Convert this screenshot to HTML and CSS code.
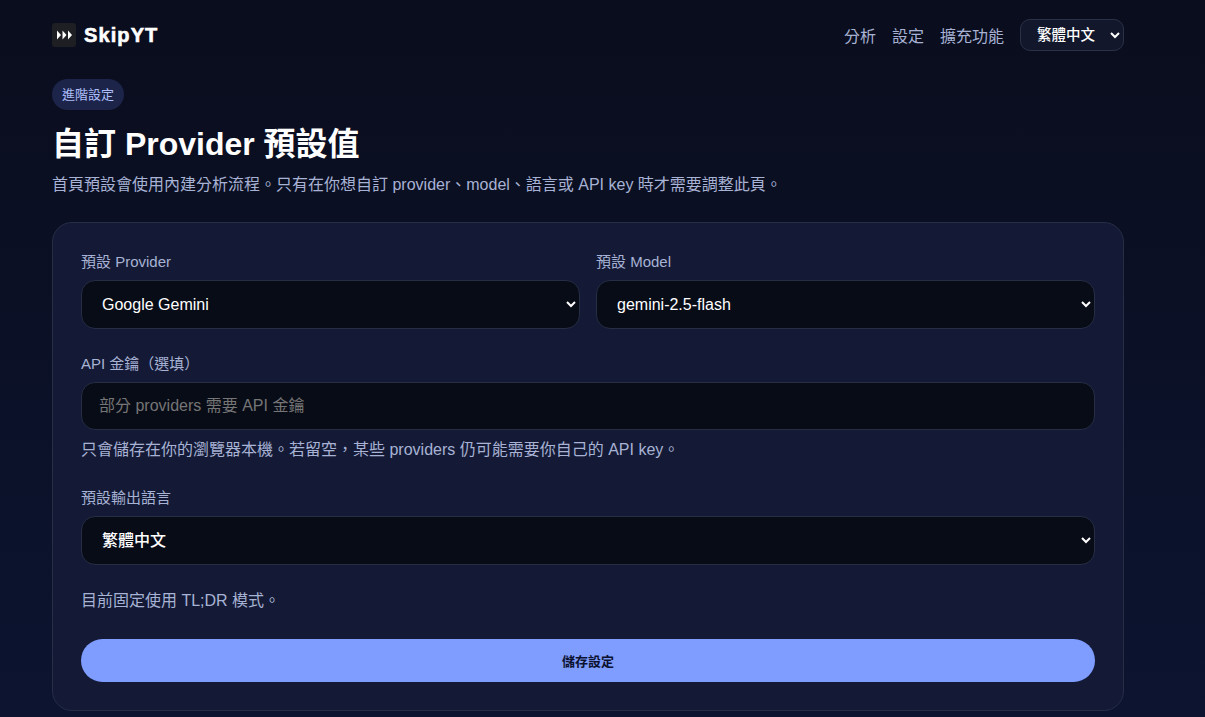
FILE: index.html
```html
<!DOCTYPE html>
<html lang="zh-Hant">
<head>
  <meta charset="utf-8">
  <title>SkipYT</title>
  <link rel="stylesheet" href="styles.css">
</head>
<body>
  <div class="container">
    <header class="topbar">
      <a class="brand" href="#">
        <span class="brand-icon">
          <svg width="16" height="10" viewBox="0 0 16 10" fill="#fff"><path d="M1 0.500 L5 5 L1 9.500Z"/><path d="M6.500 0.500 L10.500 5 L6.500 9.500Z"/><path d="M12 0.500 L16 5 L12 9.500Z"/></svg>
        </span>
        <span class="brand-name">SkipYT</span>
      </a>
      <nav class="nav">
        <a href="#">分析</a>
        <a href="#">設定</a>
        <a href="#">擴充功能</a>
        <select class="lang-select">
          <option>繁體中文</option>
          <option>English</option>
        </select>
      </nav>
    </header>

    <span class="badge">進階設定</span>
    <h1>自訂 Provider 預設值</h1>
    <p class="subtitle">首頁預設會使用內建分析流程。只有在你想自訂 provider、model、語言或 API key 時才需要調整此頁。</p>

    <form class="card">
      <div class="form-row">
        <div class="field">
          <label for="provider">預設 Provider</label>
          <select id="provider">
            <option>Google Gemini</option>
          </select>
        </div>
        <div class="field">
          <label for="model">預設 Model</label>
          <select id="model">
            <option>gemini-2.5-flash</option>
          </select>
        </div>
      </div>

      <div class="field field-key">
        <label for="apiKey">API 金鑰（選填）</label>
        <input type="text" id="apiKey" placeholder="部分 providers 需要 API 金鑰">
        <p class="hint">只會儲存在你的瀏覽器本機。若留空，某些 providers 仍可能需要你自己的 API key。</p>
      </div>

      <div class="field field-lang">
        <label for="language">預設輸出語言</label>
        <select id="language" class="select-bold">
          <option>繁體中文</option>
        </select>
      </div>

      <p class="mode-note">目前固定使用 TL;DR 模式。</p>

      <button type="button" class="save-btn">儲存設定</button>
    </form>
  </div>
</body>
</html>
```

FILE: styles.css
```css
* {
  box-sizing: border-box;
}
html {
  height: 100%;
}
body {
  margin: 0;
  height: 717px;
  overflow: hidden;
  font-family: "Liberation Sans", "Noto Sans CJK TC", sans-serif;
  background: linear-gradient(180deg, #0a0d1d 0%, #0c1430 100%);
  color: #fff;
}
.container {
  width: 1072px;
  margin-left: 52px;
}
.topbar {
  display: flex;
  justify-content: space-between;
  align-items: center;
  height: 70px;
}
.brand {
  display: flex;
  align-items: center;
  gap: 8px;
  color: #fff;
  text-decoration: none;
}
.brand-icon {
  display: flex;
  align-items: center;
  justify-content: center;
  width: 24px;
  height: 24px;
  border-radius: 3px;
  background-color: #1e1f23;
}
.brand-name {
  font-size: 20px;
  font-weight: 700;
  letter-spacing: 1.1px;
  -webkit-text-stroke: 0.6px #fff;
}
.nav {
  display: flex;
  align-items: center;
  gap: 16px;
}
.nav a {
  color: #a7b2d4;
  font-size: 16px;
  text-decoration: none;
}
.lang-select {
  width: 104px;
  height: 32px;
  padding: 0 8px 0 12px;
  border: 1px solid #2b3248;
  border-radius: 10px;
  background-color: #12172b;
  color: #fff;
  font-family: inherit;
  font-size: 14.5px;
  font-weight: 500;
}
.badge {
  display: inline-block;
  margin-top: 9px;
  padding: 0 10px;
  height: 31px;
  line-height: 32px;
  border-radius: 16px;
  background-color: #1c2549;
  color: #aebffa;
  font-size: 13px;
}
h1 {
  margin: 12px 0 0;
  font-size: 32px;
  line-height: 44px;
  font-weight: 700;
}
.subtitle {
  margin: 7px 0 0;
  color: #a7b2d4;
  font-size: 16px;
  line-height: 24px;
}
.card {
  margin-top: 25px;
  padding: 28px;
  border: 1px solid #262d45;
  border-radius: 20px;
  background-color: #141a35;
}
.form-row {
  display: grid;
  grid-template-columns: 1fr 1fr;
  gap: 16px;
}
.field {
  display: flex;
  flex-direction: column;
}
.field label {
  margin-bottom: 7px;
  color: #a7b2d4;
  font-size: 15px;
  line-height: 22px;
}
.field select,
.field input {
  width: 100%;
  height: 49px;
  border: 1px solid #262d45;
  border-radius: 14px;
  background-color: #080c17;
  color: #fff;
  font-family: inherit;
  font-size: 16px;
  outline: none;
}
.field select {
  padding: 0 12px 0 16px;
}
.field .select-bold {
  font-weight: 500;
}
.field input {
  height: 48px;
  padding: 0 17px;
}
.field input::placeholder {
  color: #757575;
}
.hint {
  margin: 8px 0 0;
  color: #a7b2d4;
  font-size: 16px;
  line-height: 24px;
}
.field-key {
  margin-top: 24px;
}
.field-lang {
  margin-top: 25px;
}
.mode-note {
  margin: 24px 0 0;
  color: #a7b2d4;
  font-size: 16px;
  line-height: 24px;
}
.save-btn {
  display: block;
  width: 100%;
  height: 43px;
  margin-top: 26px;
  border: none;
  border-radius: 22px;
  background-color: #7f9cff;
  color: #0b1230;
  font-family: inherit;
  font-size: 13px;
  font-weight: 700;
  cursor: pointer;
}
```
